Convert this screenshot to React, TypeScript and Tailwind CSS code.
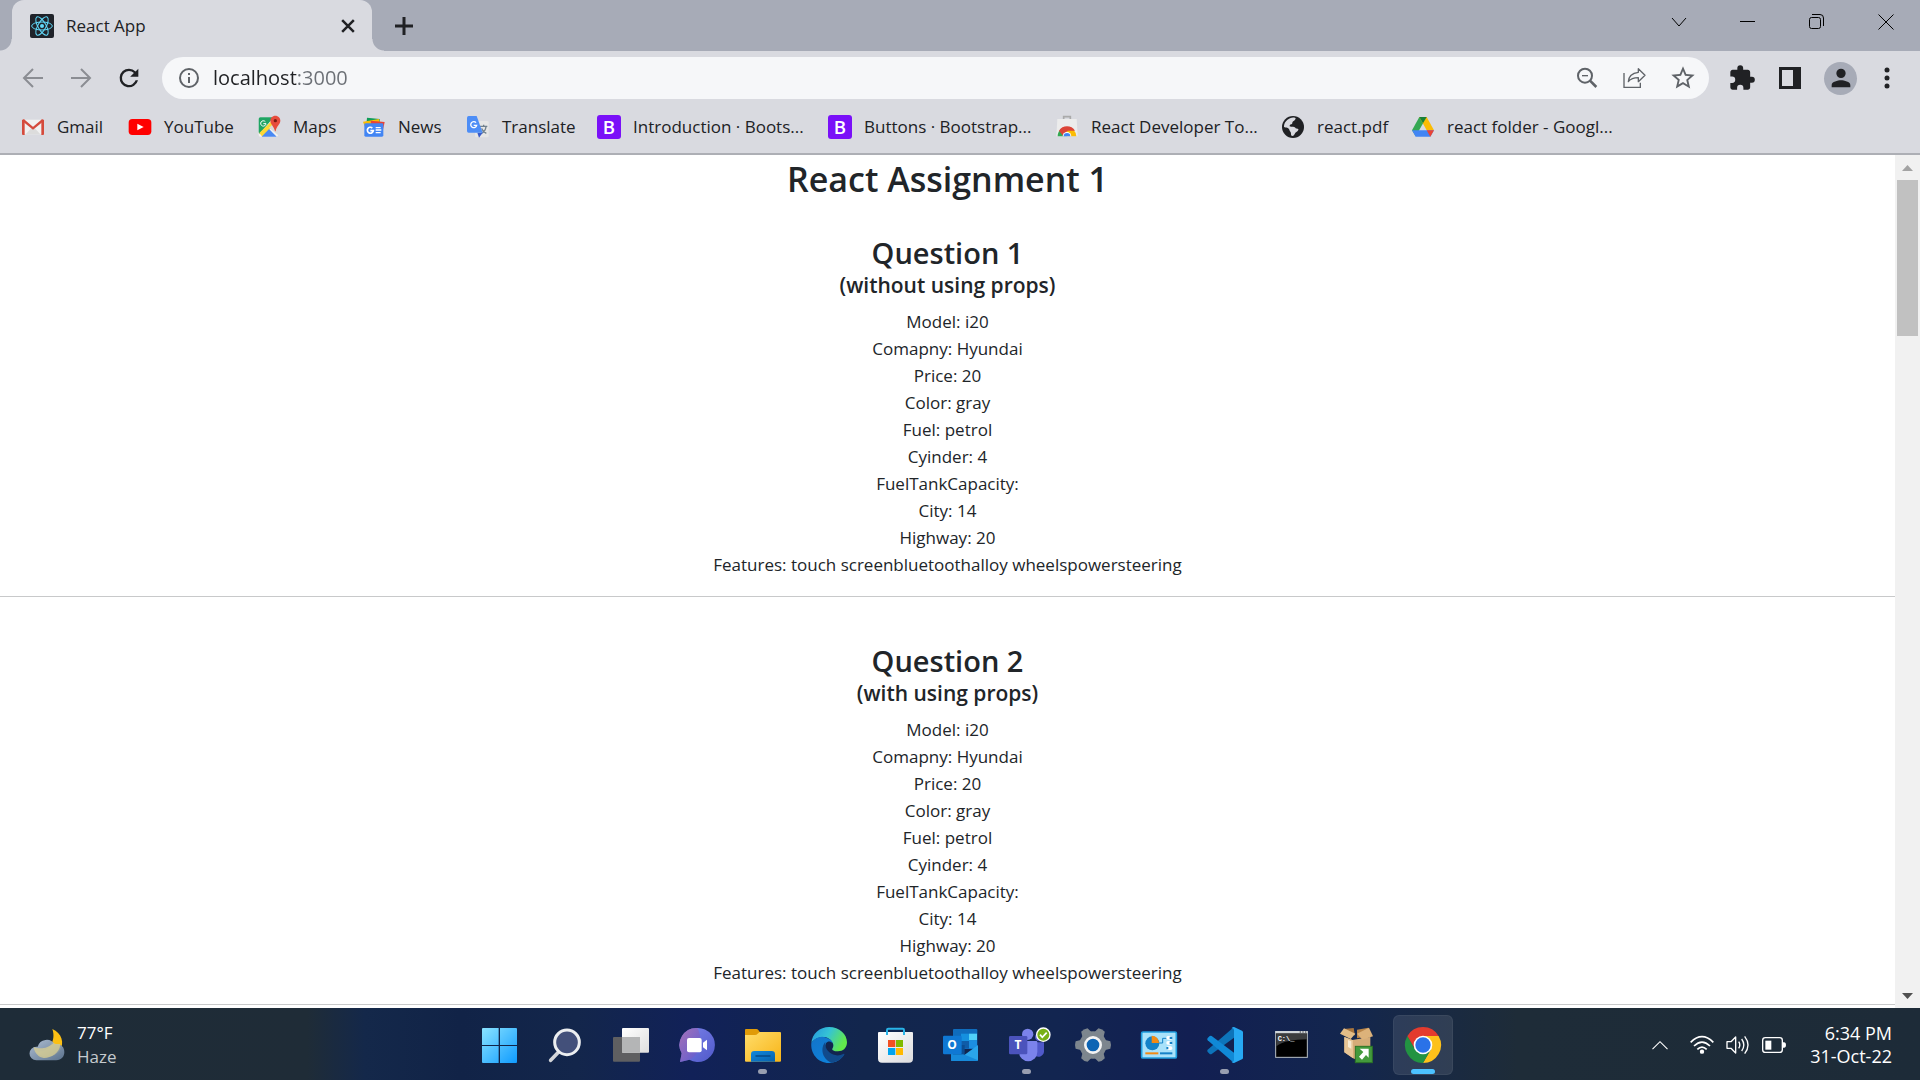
import type { ReactNode } from "react";

/* ---------- Browser chrome icons ---------- */

function ReactIcon() {
  return (
    <svg viewBox="0 0 72 72" className="size-6 shrink-0">
      <rect width="72" height="72" rx="6" fill="#20232a" />
      <g fill="none" stroke="#61dafb" strokeWidth="3">
        <ellipse cx="36" cy="36" rx="31" ry="12" />
        <ellipse cx="36" cy="36" rx="31" ry="12" transform="rotate(60 36 36)" />
        <ellipse cx="36" cy="36" rx="31" ry="12" transform="rotate(120 36 36)" />
      </g>
      <circle cx="36" cy="36" r="6" fill="#61dafb" />
    </svg>
  );
}

function Line({ d, size = "size-6", width = 2, color = "#202124" }: { d: string; size?: string; width?: number; color?: string }) {
  return (
    <svg viewBox="0 0 24 24" className={size + " shrink-0"} fill="none" stroke={color} strokeWidth={width}>
      <path d={d} />
    </svg>
  );
}

function Solid({ d, color = "#202124" }: { d: string; color?: string }) {
  return (
    <svg viewBox="0 0 24 24" className="size-7 shrink-0" fill={color}>
      <path d={d} />
    </svg>
  );
}

/* ---------- Bookmark icons ---------- */

function Favicon({ children }: { children: ReactNode }) {
  return (
    <svg viewBox="0 0 72 72" className="size-6 shrink-0">
      {children}
    </svg>
  );
}

const gmail = (
  <Favicon>
    <path d="M8 14h56v44H8z" fill="#f1f1f1" />
    <path d="M14 58l22-24 22 24z" fill="#dcdcdc" />
    <path d="M3 14h8v46H6q-3 0-3-3z" fill="#d54b3d" />
    <path d="M69 14h-8v46h5q3 0 3-3z" fill="#d54b3d" />
    <path d="M6 15l30 25 30-25" fill="none" stroke="#d54b3d" strokeWidth="7" />
  </Favicon>
);
const youtube = (
  <Favicon>
    <rect x="2" y="12" width="68" height="48" rx="11" fill="#f00" />
    <path d="M28 26l19 10-19 10z" fill="#fff" />
  </Favicon>
);
const maps = (
  <Favicon>
    <rect x="5" y="7" width="58" height="58" rx="5" fill="#f2f2f2" />
    <path d="M10 7h40L8 56q-3-1-3-5V12q0-5 5-5z" fill="#1fa463" />
    <path d="M48 14L7 54l9 11 32-31z" fill="#fdd835" />
    <path d="M14 65l22-23 23 23z" fill="#4a89f3" />
    <path d="M36 38l27 22V36L48 28z" fill="#dadada" />
    <path d="M25 20a8 8 0 1 0 2 6h-8" fill="none" stroke="#fff" strokeWidth="3" />
    <path d="M55 2c-9 0-15 7-15 15 0 11 11 16 14 32h2c2-16 14-21 14-32C70 9 64 2 55 2z" fill="#e74c3d" />
    <circle cx="55" cy="17" r="5" fill="#7a1b12" />
  </Favicon>
);
const news = (
  <Favicon>
    <path d="M15 8l38 4v18H13z" fill="#0f9d58" />
    <path d="M3 20l48-8 4 22H8z" fill="#fbbc04" />
    <path d="M26 17l42 4-6 28H30z" fill="#ea4335" />
    <rect x="7" y="25" width="57" height="40" rx="4" fill="#4285f4" />
    <path d="M31 39a9 9 0 1 0 3 8h-9" fill="none" stroke="#fff" strokeWidth="5" />
    <path d="M41 38h15M41 45h17M41 53h15" stroke="#fff" strokeWidth="4" />
  </Favicon>
);
const translate = (
  <Favicon>
    <rect x="27" y="18" width="41" height="49" rx="4" fill="#e6e6e6" />
    <path d="M42 34h22M53 29v6M46 55c9-4 13-11 14-20M47 40c2 7 8 12 14 15" stroke="#70808d" strokeWidth="4" fill="none" />
    <path d="M34 53h16L39 68z" fill="#3a5bc7" />
    <path d="M8 3h24l18 50H8q-5 0-5-5V8q0-5 5-5z" fill="#4d8df6" />
    <path d="M30 23a9 9 0 1 0 2 8h-9" fill="none" stroke="#fff" strokeWidth="4" />
  </Favicon>
);
const bootstrap = (
  <Favicon>
    <rect y="0" width="72" height="72" rx="9" fill="#7a10f8" />
    <text x="36" y="56" textAnchor="middle" fontSize="56" fontWeight="600" fontFamily="Open Sans, sans-serif" fill="#fff">
      B
    </text>
  </Favicon>
);
const webstore = (
  <Favicon>
    <path d="M26 13V5h20v8" fill="none" stroke="#aaa" strokeWidth="5" />
    <path d="M7 12h58l3 52H4z" fill="#ececec" />
    <path d="M8 64a28 28 0 0 1 14-24l14 24z" fill="#34a853" />
    <path d="M64 64a28 28 0 0 0-8-19H36v19z" fill="#fbbc04" />
    <path d="M12 47a28 28 0 0 1 48 0H38L24 62z" fill="#dc4437" />
    <path d="M23 64a13 13 0 0 1 26 0z" fill="#fff" />
    <path d="M26 64a10 10 0 0 1 20 0z" fill="#4285f4" />
  </Favicon>
);
const globe = (
  <Favicon>
    <circle cx="36" cy="36" r="33" fill="#202124" />
    <path d="M27 10c8-4 16-2 17 0-2 9-10 8-10 14 0 5-8 3-8 9 0 4 14 0 17 5 2 4 11 1 9 7-3 7-9 6-11 12-3 8-12 7-11 0 1-7-4-7-5-13-2-7-10-5-16-8 0-12 7-21 18-26z" fill="#d9dae0" />
    <path d="M49 14c9 5 14 13 14 24-6 0-7-6-12-6-6 0-9-5-5-8 4-4 3-6 3-10z" fill="#202124" />
  </Favicon>
);
const drive = (
  <Favicon>
    <path d="M25 6h22L14 64 3 46z" fill="#34a853" />
    <path d="M25 6h22l22 40H47z" fill="#fbbc04" />
    <path d="M25 6h22L36 25z" fill="#188038" />
    <path d="M3 46h66L58 65H14z" fill="#4285f4" />
    <path d="M47 46h22L58 65z" fill="#ea4335" />
  </Favicon>
);

const bookmarks: { label: string; icon: ReactNode; width: string }[] = [
  { label: "Gmail", icon: gmail, width: "w-[107px]" },
  { label: "YouTube", icon: youtube, width: "w-[129px]" },
  { label: "Maps", icon: maps, width: "w-[105px]" },
  { label: "News", icon: news, width: "w-[104px]" },
  { label: "Translate", icon: translate, width: "w-[131px]" },
  { label: "Introduction · Boots...", icon: bootstrap, width: "w-[231px]" },
  { label: "Buttons · Bootstrap...", icon: bootstrap, width: "w-[227px]" },
  { label: "React Developer To...", icon: webstore, width: "w-[226px]" },
  { label: "react.pdf", icon: globe, width: "w-[130px]" },
  { label: "react folder - Googl...", icon: drive, width: "w-[220px]" },
];

/* ---------- Browser ---------- */

function TabStrip() {
  return (
    <div className="flex h-[51px] shrink-0 items-center bg-[#a7abb7]">
      <span className="size-3 self-end bg-[radial-gradient(circle_at_top_left,#a7abb7_11px,#d9dae0_12px)]" />
      <div className="flex h-full w-[360px] items-center rounded-t-xl bg-[#d9dae0] pr-3 pl-[18px]">
        <ReactIcon />
        <span className="ml-3 flex-1 text-[17px] text-[#202124]">React App</span>
        <button aria-label="Close tab" className="flex size-6 items-center justify-center">
          <Line d="M5 5l14 14M19 5L5 19" size="size-5" width={3} />
        </button>
      </div>
      <span className="size-3 self-end bg-[radial-gradient(circle_at_top_right,#a7abb7_11px,#d9dae0_12px)]" />
      <button aria-label="New tab" className="ml-2 flex size-6 items-center justify-center">
        <Line d="M12 3v18M3 12h18" width={3} />
      </button>
      <div className="ml-auto flex h-11 items-center self-start">
        <button aria-label="Search tabs" className="flex w-[69px] justify-center">
          <Line d="M5 8l7 8 7-8" width={1} color="#000" />
        </button>
        <button aria-label="Minimize" className="flex w-[69px] justify-center">
          <Line d="M4 11.500h15" width={1} color="#000" />
        </button>
        <button aria-label="Restore" className="flex w-[69px] justify-center">
          <Line d="M6.500 7.500h7q2 0 2 2v7q0 2-2 2h-7q-2 0-2-2v-7q0-2 2-2zM7 4.500h8q3.500 0 3.500 3.500v8" width={1} color="#000" />
        </button>
        <button aria-label="Close window" className="flex w-[69px] justify-center">
          <Line d="M4.500 4.500l15 15M19.500 4.500l-15 15" width={1} color="#000" />
        </button>
      </div>
    </div>
  );
}

function Toolbar() {
  return (
    <div className="flex h-[54px] shrink-0 items-center bg-[#d9dae0] pr-[19px] pl-[21px]">
      <button aria-label="Back" className="mr-6">
        <Line d="M22 12H3M12 3l-9 9 9 9" color="#8b8d93" />
      </button>
      <button aria-label="Forward" className="mr-[22px]">
        <Line d="M2 12h19M12 3l9 9-9 9" color="#8b8d93" />
      </button>
      <button aria-label="Reload" className="mr-[19px]">
        <Solid d="M17.650 6.350A7.960 7.960 0 0 0 12 4a8 8 0 1 0 7.730 10h-2.080A6 6 0 1 1 12 6c1.660 0 3.140.69 4.220 1.780L13 11h7V4z" />
      </button>
      <div className="flex h-[42px] flex-1 items-center rounded-full bg-[#f6f7f9] pr-3 pl-[15px]">
        <svg viewBox="0 0 24 24" className="size-6 shrink-0" fill="none" stroke="#5f6368" strokeWidth="2">
          <circle cx="12" cy="12" r="9" />
          <path d="M12 11v6M12 7v2" />
        </svg>
        <input
          aria-label="Address"
          defaultValue="localhost:3000"
          className="ml-3 min-w-0 flex-1 bg-[linear-gradient(to_right,#202124_85px,#6b6f75_85px)] bg-clip-text text-[20px] text-transparent outline-none"
        />
        <div className="flex items-center gap-5">
          <button aria-label="Zoom">
            <svg viewBox="0 0 84 84" className="size-7" fill="none" stroke="#5f6368" strokeWidth="6">
              <circle cx="36" cy="35" r="21" />
              <path d="M51 50l19 19" strokeWidth="8" />
              <path d="M27 35h18" strokeWidth="4" />
            </svg>
          </button>
          <button aria-label="Share">
            <svg viewBox="0 0 84 84" className="size-7" fill="none" stroke="#5f6368" strokeWidth="4">
              <path d="M9 27v43h49V56" />
              <path d="M52 14l20 20-20 19V41C38 41 29 44 22 53c1-16 13-26 30-28z" strokeLinejoin="round" />
            </svg>
          </button>
          <button aria-label="Bookmark this page">
            <Solid
              color="#5f6368"
              d="M22 9.240l-7.190-.62L12 2 9.190 8.630 2 9.240l5.460 4.730L5.820 21 12 17.270 18.180 21l-1.630-7.030zM12 15.400l-3.760 2.270 1-4.280-3.320-2.880 4.380-.38L12 6.100l1.710 4.040 4.380.38-3.320 2.880 1 4.280z"
            />
          </button>
        </div>
      </div>
      <div className="ml-[19px] flex items-center gap-5">
        <button aria-label="Extensions">
          <Solid d="M20.500 11H19V7c0-1.100-.9-2-2-2h-4V3.500a2.500 2.500 0 0 0-5 0V5H4c-1.100 0-2 .9-2 2v3.800h1.500a2.700 2.700 0 0 1 0 5.400H2V20c0 1.100.9 2 2 2h3.800v-1.500a2.700 2.700 0 0 1 5.400 0V22H17c1.100 0 2-.9 2-2v-4h1.500a2.500 2.500 0 0 0 0-5z" />
        </button>
        <button aria-label="Side panel" className="flex w-7 justify-center">
          <svg viewBox="0 0 22 22" className="size-[22px]">
            <path d="M0 0h22v22H0zM3 3v16h11V3z" fill="#202124" fillRule="evenodd" />
          </svg>
        </button>
        <div className="flex items-center gap-4">
          <button aria-label="Profile" className="flex size-[33px] items-center justify-center rounded-full bg-[#a7abb7]">
            <Solid d="M12 12a4 4 0 1 0 0-8 4 4 0 0 0 0 8zM12 14c-2.700 0-8 1.300-8 4v2h16v-2c0-2.700-5.300-4-8-4z" />
          </button>
          <button aria-label="Menu">
            <svg viewBox="0 0 28 28" className="size-7" fill="#202124">
              <circle cx="14" cy="6" r="2.500" />
              <circle cx="14" cy="14" r="2.500" />
              <circle cx="14" cy="22" r="2.500" />
            </svg>
          </button>
        </div>
      </div>
    </div>
  );
}

function BookmarksBar() {
  return (
    <nav aria-label="Bookmarks" className="flex h-[50px] shrink-0 items-center border-b-2 border-[#adafb5] bg-[#d9dae0] pb-[5px] pl-[21px]">
      {bookmarks.map((b) => (
        <a key={b.label} href="#" className={"flex h-full shrink-0 items-center gap-3 text-[17px] whitespace-nowrap text-[#202124] " + b.width}>
          {b.icon}
          {b.label}
        </a>
      ))}
    </nav>
  );
}

/* ---------- Page content ---------- */

const car = [
  "Model: i20",
  "Comapny: Hyundai",
  "Price: 20",
  "Color: gray",
  "Fuel: petrol",
  "Cyinder: 4",
  "FuelTankCapacity:",
  "City: 14",
  "Highway: 20",
  "Features: touch screenbluetoothalloy wheelspowersteering",
];

function Question({ title, note }: { title: string; note: string }) {
  return (
    <section className="mb-[46px] border-b border-[#c8c9ca] pb-[18px]">
      <h2 className="text-[29px] leading-[36px] font-semibold">{title}</h2>
      <h5 className="mb-2 text-[21px] leading-[29px] font-semibold">{note}</h5>
      {car.map((line) => (
        <p key={line} className="text-[17px] leading-[27px]">
          {line}
        </p>
      ))}
    </section>
  );
}

function Page() {
  return (
    <div className="flex min-h-0 flex-1 bg-white">
      <main className="min-w-0 flex-1 overflow-hidden text-center text-[#212529]">
        <h1 className="mb-8 text-[34px] leading-[48px] font-semibold">React Assignment 1</h1>
        <Question title="Question 1" note="(without using props)" />
        <Question title="Question 2" note="(with using props)" />
      </main>
      <div className="flex w-[25px] shrink-0 flex-col items-center justify-between bg-[#f1f1f1]">
        <svg viewBox="0 0 25 25" className="size-[25px]">
          <path d="M7 16h11l-5.500-6z" fill="#a3a3a3" />
        </svg>
        <div className="mb-auto h-[156px] w-[21px] bg-[#c1c1c1]" />
        <svg viewBox="0 0 25 25" className="size-[25px]">
          <path d="M7 10h11l-5.500 6z" fill="#505050" />
        </svg>
      </div>
    </div>
  );
}

/* ---------- Taskbar ---------- */

function Gradient({ id, from, to }: { id: string; from: string; to: string }) {
  return (
    <linearGradient id={id} x1="0" y1="0" x2="1" y2="1">
      <stop offset="0" stopColor={from} />
      <stop offset="1" stopColor={to} />
    </linearGradient>
  );
}

const gearTeeth = [0, 60, 120, 180, 240, 300];

const apps: { name: string; state?: "open" | "active"; art: ReactNode }[] = [
  {
    name: "Start",
    art: (
      <>
        <Gradient id="win" from="#8ae3ff" to="#0f9bff" />
        <path d="M6 3h47v51H3V6q0-3 3-3zM57 3h48q3 0 3 3v48H57zM3 57h50v51H6q-3 0-3-3zM57 57h51v48q0 3-3 3H57z" fill="url(#win)" />
      </>
    ),
  },
  {
    name: "Search",
    art: (
      <>
        <path d="M34 76l-23 24" stroke="#d3d5d8" strokeWidth="11" strokeLinecap="round" />
        <circle cx="60" cy="46" r="37" fill="#43507a" stroke="#eceef0" strokeWidth="9" />
      </>
    ),
  },
  {
    name: "Task View",
    art: (
      <>
        <Gradient id="tv" from="#ffffff" to="#dedede" />
        <rect y="30" width="81" height="74" rx="3" fill="#5f5f61" />
        <rect x="27" y="3" width="81" height="74" rx="3" fill="url(#tv)" />
        <path d="M27 30h54v47H30q-3 0-3-3z" fill="#b4b5b6" />
      </>
    ),
  },
  {
    name: "Chat",
    art: (
      <>
        <Gradient id="chat" from="#b9699f" to="#5b5bd6" />
        <Gradient id="chat2" from="#7b83eb" to="#5059c9" />
        <path d="M55 3a51 51 0 1 1-24 95L3 105l5-26A51 51 0 0 1 55 3z" fill="url(#chat2)" />
        <path d="M55 3a51 51 0 0 0-47 76L3 105l28-7c30-10 44-60 24-95z" fill="url(#chat)" opacity=".7" />
        <rect x="24" y="33" width="44" height="43" rx="6" fill="#fff" />
        <path d="M72 47l12-9v32l-12-9z" fill="#fff" />
      </>
    ),
  },
  {
    name: "File Explorer",
    state: "open",
    art: (
      <>
        <Gradient id="fe" from="#ffdd6b" to="#f8b417" />
        <Gradient id="feb" from="#1288dc" to="#0761ad" />
        <path d="M0 9q0-3 3-3h31q4 0 6 3l6 8v10H0z" fill="#e09b08" />
        <path d="M0 24h30q5 0 8-4l6-5h61q3 0 3 3v83q0 3-3 3H3q-3 0-3-3z" fill="url(#fe)" />
        <path d="M18 104V82q0-10 10-10h52q10 0 10 10v22z" fill="url(#feb)" />
        <path d="M33 87h42" stroke="#064a86" strokeWidth="4" strokeLinecap="round" />
      </>
    ),
  },
  {
    name: "Microsoft Edge",
    art: (
      <>
        <linearGradient id="edge" x1="0" x2="1" y1="0" y2=".4">
          <stop offset="0" stopColor="#2395de" />
          <stop offset=".5" stopColor="#35c3d5" />
          <stop offset="1" stopColor="#62e84c" />
        </linearGradient>
        <Gradient id="edge2" from="#1374c9" to="#0d86e0" />
        <path d="M1 48C3 20 27 0 54 0c32 0 54 22 54 46 0 17-12 27-27 27-11 0-19-4-17-8 4-5 4-12 1-17C53 22 16 26 1 48z" fill="url(#edge)" />
        <path d="M1 48C12 31 31 26 46 32c12 4 19 10 19 17-5-6-15-8-20 0-8 16 4 37 23 40 14 2 25-3 31-7C90 99 73 108 54 108 20 108-2 79 1 48z" fill="url(#edge2)" />
        <path d="M43 45c-14 15-13 48 18 62 17-2 31-11 39-24 1-2-1-3-3-2-14 7-31 5-42-5-10-9-14-20-12-31z" fill="#114a8b" />
      </>
    ),
  },
  {
    name: "Microsoft Store",
    art: (
      <>
        <Gradient id="store" from="#ffffff" to="#dcdcde" />
        <path d="M3 18q0-3 3-3h99q3 0 3 3v77q0 12-12 12H15Q3 107 3 95z" fill="url(#store)" />
        <path d="M30 24V9q0-4 4-4h43q4 0 4 4v15" fill="none" stroke="#29b4e8" strokeWidth="6" />
        <path d="M33 39h22v21H33z" fill="#f25022" />
        <path d="M57 39h21v21H57z" fill="#7fba00" />
        <path d="M33 63h22v21H33z" fill="#00a4ef" />
        <path d="M57 63h21v21H57z" fill="#ffb900" />
      </>
    ),
  },
  {
    name: "Outlook",
    art: (
      <>
        <rect x="30" y="6" width="73" height="60" rx="3" fill="#0f6cbd" />
        <path d="M54 20h24v22H54z" fill="#1590df" />
        <path d="M78 20h24v20H78z" fill="#50d0f8" />
        <path d="M54 42h24v22H54z" fill="#0f5ca8" />
        <path d="M78 40h24v24H78z" fill="#1c8ee0" />
        <path d="M24 66h0l40 18 41-30v44q0 4-4 4H28q-4 0-4-4z" fill="#2aa5ea" />
        <path d="M24 66l81 34q-2 2-4 2H28q-4 0-4-4z" fill="#178ada" />
        <path d="M30 54h35v28H30z" fill="#0b4c91" />
        <rect y="26" width="56" height="56" rx="4" fill="#0f78d4" />
        <text x="27" y="67" textAnchor="middle" fontSize="36" fontWeight="700" fontFamily="Open Sans, sans-serif" fill="#fff">
          O
        </text>
      </>
    ),
  },
  {
    name: "Microsoft Teams",
    state: "open",
    art: (
      <>
        <circle cx="91" cy="30" r="13" fill="#5059c9" />
        <path d="M76 46h29v24a17 17 0 0 1-29 14z" fill="#5059c9" />
        <circle cx="56" cy="22" r="17" fill="#7b83eb" />
        <path d="M30 42h52q3 0 3 3v30a27 27 0 0 1-55 0z" fill="#7b83eb" />
        <rect y="27" width="55" height="55" rx="4" fill="#4b53bc" />
        <text x="27" y="67" textAnchor="middle" fontSize="36" fontWeight="700" fontFamily="Open Sans, sans-serif" fill="#fff">
          T
        </text>
        <circle cx="103" cy="23" r="20" fill="#78b016" stroke="#fff" strokeWidth="4" />
        <path d="M93 23l7 8 13-14" fill="none" stroke="#fff" strokeWidth="5" />
      </>
    ),
  },
  {
    name: "Settings",
    art: (
      <>
        <circle cx="54" cy="54" r="41" fill="#7d868e" />
        {gearTeeth.map((a) => (
          <path key={a} d="M38 20L43 2q11-4 22 0l5 18z" fill="#7d868e" transform={"rotate(" + (a + 30) + " 54 54)"} />
        ))}
        <circle cx="54" cy="54" r="23" fill="#0c64b4" stroke="#f3f3f3" strokeWidth="8" />
      </>
    ),
  },
  {
    name: "Control Panel",
    art: (
      <>
        <rect x="2" y="15" width="104" height="78" rx="4" fill="#a9e2fa" stroke="#1f9fe0" strokeWidth="5" />
        <circle cx="34" cy="49" r="21" fill="#1482c8" />
        <path d="M32 48V26a22 22 0 0 1 22 22z" fill="#f28a13" />
        <path d="M55 48h10V34h12" fill="none" stroke="#1482c8" strokeWidth="3" />
        <rect x="76" y="27" width="18" height="11" rx="5" fill="#fff" />
        <rect x="76" y="42" width="18" height="11" rx="5" fill="#fff" />
        <rect x="76" y="58" width="18" height="11" rx="5" fill="#fff" />
        <path d="M86 29h8v7h-8zM86 44h8v7h-8zM76 60h6v7h-6z" fill="#1482c8" />
        <path d="M13 79h39" stroke="#f28a13" strokeWidth="6" />
        <path d="M57 79h37" stroke="#1482c8" strokeWidth="6" />
      </>
    ),
  },
  {
    name: "Visual Studio Code",
    state: "open",
    art: (
      <>
        <path d="M81 0v32L14 81q-3 2-6 0l-6-6q-3-4 0-7z" fill="#0d74ba" />
        <path d="M2 40q-3-3 0-7l6-6q3-2 6 0l67 50v31z" fill="#1089d6" />
        <path d="M81 0l24 11q3 2 3 5v76q0 4-3 5l-24 11q-4 0-8-4 8 2 8-5V9q0-6-8-5 4-4 8-4z" fill="#27a9f3" />
      </>
    ),
  },
  {
    name: "Command Prompt",
    art: (
      <>
        <rect x="8" y="14" width="95" height="77" fill="#000" stroke="#b9c0c6" strokeWidth="3" />
        <path d="M10 19h92v18C62 38 30 42 10 58z" fill="#3b3d3f" />
        <path d="M7 12h97v7H7z" fill="#cfd5da" />
        <path d="M80 15h4M88 15h4M96 15h4" stroke="#333" strokeWidth="3" />
        <text x="14" y="41" fontSize="21" fontWeight="700" fontFamily="Liberation Mono, monospace" fill="#fff">
          C:\_
        </text>
      </>
    ),
  },
  {
    name: "Package Installer",
    art: (
      <>
        <path d="M16 30l24 9 54-9v46L46 96 16 76z" fill="#d5ac78" />
        <path d="M16 30l26 10v54L16 76z" fill="#e6c596" />
        <path d="M27 39l10 4v22l-10-5z" fill="#f7ead2" />
        <path d="M14 6l30-3 4 22-30-4z" fill="#a9763e" />
        <path d="M54 8l34-6 4 24-38 8z" fill="#b98549" />
        <path d="M15 4L3 20l32 16 14-16z" fill="#e3bd87" />
        <path d="M90 2l12 26-32 10-16-18z" fill="#dcb27a" />
        <rect x="49" y="58" width="51" height="49" fill="#439a3c" stroke="#2c7427" strokeWidth="3" />
        <path d="M62 65h27v27l-8-8-12 14-9-9 13-14z" fill="#fff" />
      </>
    ),
  },
  {
    name: "Google Chrome",
    state: "active",
    art: (
      <>
        <path d="M54 27h46.800A54 54 0 0 1 54 108l23.400-40.500z" fill="#fdc11a" />
        <path d="M77.400 67.500L54 108A54 54 0 0 1 7.200 27l23.400 40.500z" fill="#229342" />
        <path d="M7.200 27a54 54 0 0 1 93.600 0H54L30.600 67.500z" fill="#e33b2e" />
        <circle cx="54" cy="54" r="28" fill="#fff" />
        <circle cx="54" cy="54" r="23" fill="#2a72e8" />
      </>
    ),
  },
];

function Weather() {
  return (
    <button className="flex items-center gap-3 text-left text-[17px] leading-6 text-white">
      <svg viewBox="0 0 108 96" className="h-8 w-9">
        <Gradient id="cloud" from="#b9c9de" to="#5f7793" />
        <path d="M70 0c28 12 38 42 22 65-15 21-52 26-74 2 34 8 66-25 52-67z" fill="#fbbf14" />
        <path d="M22 94a20 20 0 0 1 0-41h4a28 28 0 0 1 51-7c18-4 29 8 29 24 0 13-9 24-24 24z" fill="url(#cloud)" opacity=".93" />
        <path d="M14 54c16 7 42 6 60-13 6 7 14 2 20 5-2 28-30 42-50 41-14-2-28-14-30-33z" fill="#d9cf92" opacity=".75" />
      </svg>
      <span>
        <span className="block">77°F</span>
        <span className="block text-[#c5cace]">Haze</span>
      </span>
    </button>
  );
}

function Taskbar() {
  return (
    <footer className="grid h-[72px] shrink-0 grid-cols-[1fr_auto_1fr] items-center bg-[linear-gradient(90deg,#1e2c38_0%,#1f2c37_16%,#14284a_19%,#112347_24%,#13264b_30%,#112158_36%,#12264d_45%,#122550_55%,#121f52_62%,#13264e_70%,#1a2a40_76%,#1e2c38_79%,#1d2b38_100%)] pt-0.5 pr-7 pl-[29px]">
      <Weather />
      <div className="flex gap-[6px]">
        {apps.map((app) => (
          <button
            key={app.name}
            aria-label={app.name}
            className={
              "relative flex size-[60px] items-center justify-center rounded-md border " +
              (app.state === "active" ? "border-white/5 bg-white/10" : "border-transparent")
            }
          >
            <svg viewBox="0 0 108 108" className="size-9 overflow-visible">
              {app.art}
            </svg>
            {app.state === "open" && <span className="absolute bottom-0 h-[5px] w-[9px] rounded-full bg-[#989eb0]" />}
            {app.state === "active" && <span className="absolute bottom-0 h-[5px] w-6 rounded-full bg-[#4cc2ff]" />}
          </button>
        ))}
      </div>
      <div className="flex items-center justify-end text-white">
        <button aria-label="Show hidden icons" className="mr-5">
          <Line d="M3 17l9-9 9 9" width={1.3} color="#fff" size="size-5" />
        </button>
        <button aria-label="Network, volume and battery" className="mr-6 flex items-center gap-3">
          <svg viewBox="0 0 72 60" className="h-5 w-6" fill="none" stroke="#fff" strokeWidth="5">
            <path d="M2 22q34-34 68 0M12 33q24-24 48 0M22 43q14-14 28 0" />
            <circle cx="36" cy="50" r="4" fill="#fff" />
          </svg>
          <svg viewBox="0 0 72 60" className="h-5 w-6" fill="none" stroke="#fff" strokeWidth="4">
            <path d="M3 20h12L29 6v48L15 40H3z" strokeLinejoin="round" />
            <path d="M38 20q7 10 0 20M47 12q13 18 0 36M56 4q20 26 0 52" />
          </svg>
          <svg viewBox="0 0 72 60" className="h-5 w-6" fill="none" stroke="#fff" strokeWidth="4">
            <rect x="2" y="8" width="59" height="44" rx="8" />
            <path d="M10 17h18v27H10z" fill="#fff" stroke="none" />
            <path d="M62 22h5q5 0 5 8t-5 8h-5z" fill="#fff" stroke="none" />
          </svg>
        </button>
        <time className="text-right text-[18px] leading-[23px]">
          6:34 PM
          <br />
          31-Oct-22
        </time>
      </div>
    </footer>
  );
}

export default function App() {
  return (
    <div className="flex h-screen flex-col overflow-hidden font-['Open_Sans','Noto_Sans',sans-serif]">
      <TabStrip />
      <Toolbar />
      <BookmarksBar />
      <Page />
      <Taskbar />
    </div>
  );
}
